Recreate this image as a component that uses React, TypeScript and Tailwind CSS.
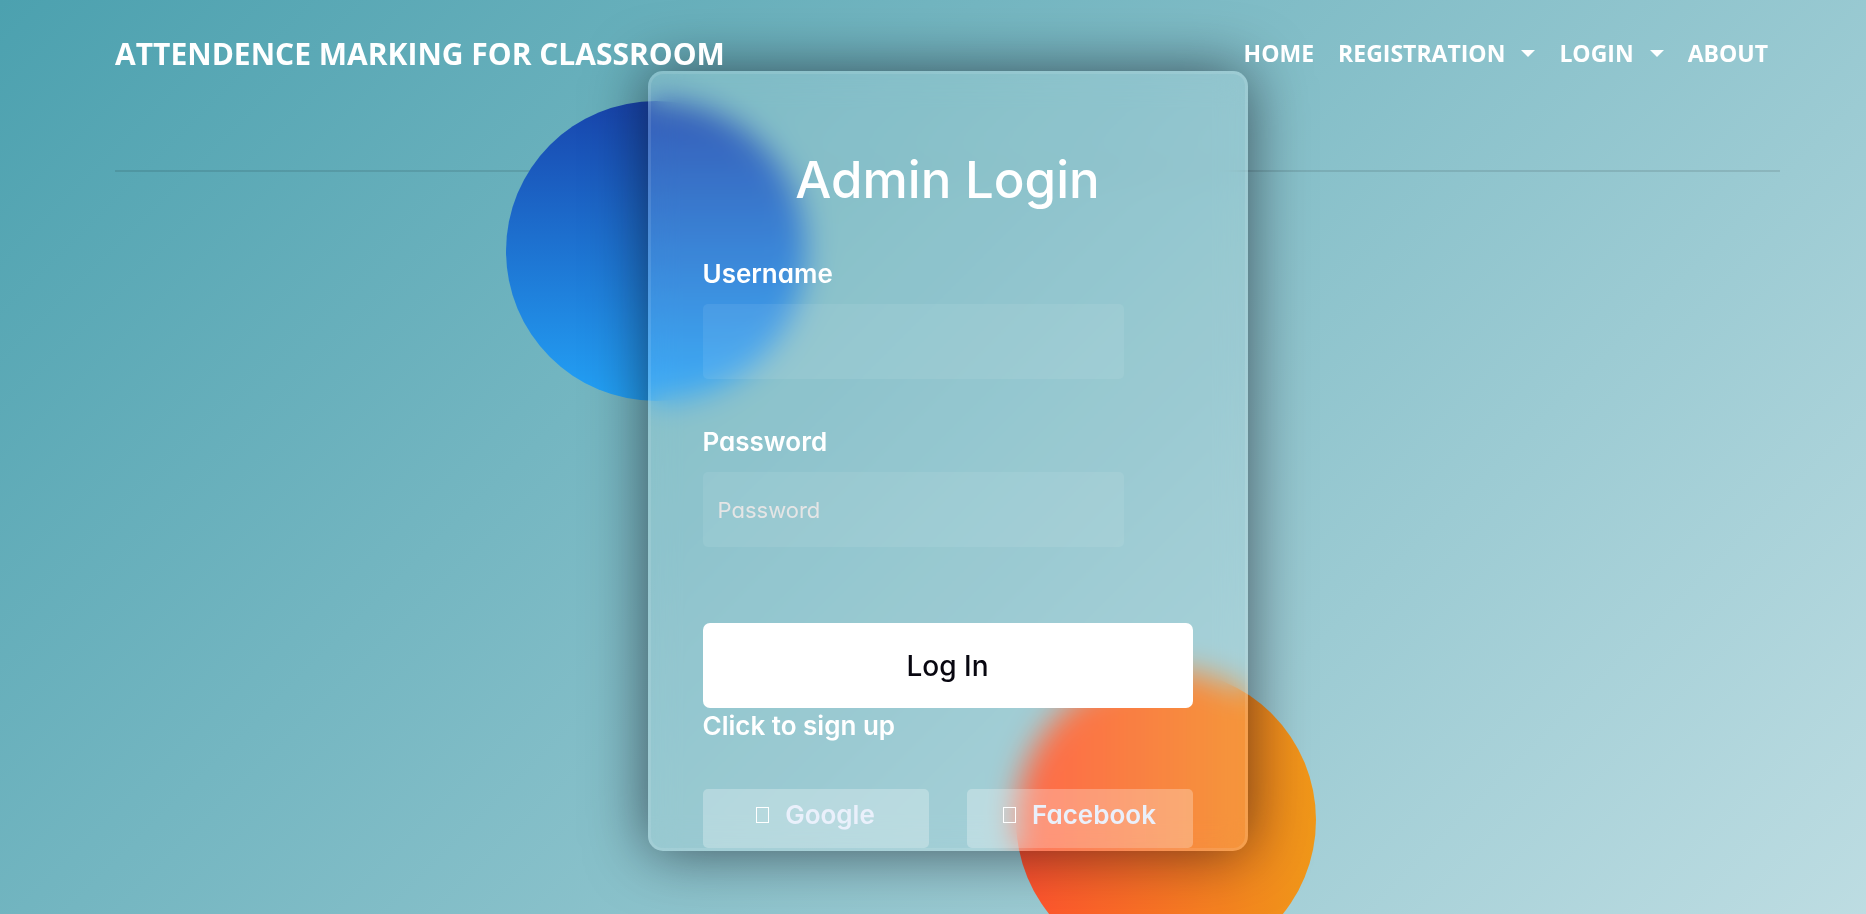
import type { ReactNode } from "react";

function Caret() {
  return (
    <svg width="14" height="7" viewBox="0 0 14 7" aria-hidden="true" className="ml-4 fill-white">
      <path d="M0 0H14L7 7Z" />
    </svg>
  );
}

function NavLink({ children, menu }: { children: ReactNode; menu?: boolean }) {
  return (
    <a href="#" className="flex items-center whitespace-nowrap">
      {children}
      {menu && <Caret />}
    </a>
  );
}

function Field({ id, label, type, placeholder }: { id: string; label: string; type: string; placeholder?: string }) {
  return (
    <div className="mt-[47px]">
      <label htmlFor={id} className="block text-[26px] leading-[31px] font-semibold">
        {label}
      </label>
      <input
        id={id}
        type={type}
        placeholder={placeholder}
        className="mt-[15px] block h-[75px] w-[86%] rounded-[5px] bg-white/[0.07] px-[15px] text-[22px] text-white outline-none placeholder:text-[#e5e5e5]"
      />
    </div>
  );
}

function SocialButton({ children }: { children: ReactNode }) {
  return (
    <button
      type="button"
      className="flex h-[59px] flex-1 items-center justify-center gap-4 rounded-[5px] bg-white/[0.27] pb-2 text-[26px] font-semibold text-[#eaf0fb]"
    >
      <span aria-hidden="true" className="h-4 w-[13px] border border-white" />
      {children}
    </button>
  );
}

export default function App() {
  return (
    <div className="relative min-h-screen overflow-hidden bg-[linear-gradient(135deg,#4ca1af_0%,#c4e0e5_106%)] pr-[86px] pl-[115px] text-white">
      <header className="relative z-10 flex h-[107px] items-center justify-between font-['Open_Sans',sans-serif] font-bold">
        <a href="#" className="text-[30px] whitespace-nowrap">
          ATTENDENCE MARKING FOR CLASSROOM
        </a>
        <nav className="flex gap-6 pr-3 text-[23px]">
          <NavLink>HOME</NavLink>
          <NavLink menu>REGISTRATION</NavLink>
          <NavLink menu>LOGIN</NavLink>
          <NavLink>ABOUT</NavLink>
        </nav>
      </header>
      <hr className="mt-[63px] border-t-2 border-black/10" />

      <div className="absolute inset-x-0 top-[71px] flex justify-center pr-[86px] pl-[115px]">
        <div className="relative w-[600px]">
          <div className="absolute top-[30px] -left-[142px] size-[300px] rounded-full bg-linear-to-b/srgb from-[#1845ad] to-[#23a2f6]" />
          <div className="absolute -right-[68px] -bottom-[119px] size-[300px] rounded-full bg-linear-to-r/srgb from-[#ff512f] to-[#f09819]" />
          <form className="relative rounded-[15px] border-[3px] border-white/10 bg-white/[0.13] px-[52px] pt-[75px] font-[Inter,sans-serif] shadow-[0_0_60px_rgba(8,7,16,0.6)] backdrop-blur-[15px] [font-feature-settings:'cv11']">
            <h1 className="text-center text-[51px] leading-[62px] font-medium">Admin Login</h1>
            <Field id="username" label="Username" type="text" />
            <Field id="password" label="Password" type="password" placeholder="Password" />
            <button
              type="submit"
              className="mt-[76px] h-[85px] w-full rounded-[7px] bg-white text-[28px] font-medium text-[#080710]"
            >
              Log In
            </button>
            <a href="#" className="mt-[2px] block text-[26px] leading-[31px] font-semibold">
              Click to sign up
            </a>
            <div className="mt-12 flex gap-[38px]">
              <SocialButton>Google</SocialButton>
              <SocialButton>Facebook</SocialButton>
            </div>
          </form>
        </div>
      </div>
    </div>
  );
}
